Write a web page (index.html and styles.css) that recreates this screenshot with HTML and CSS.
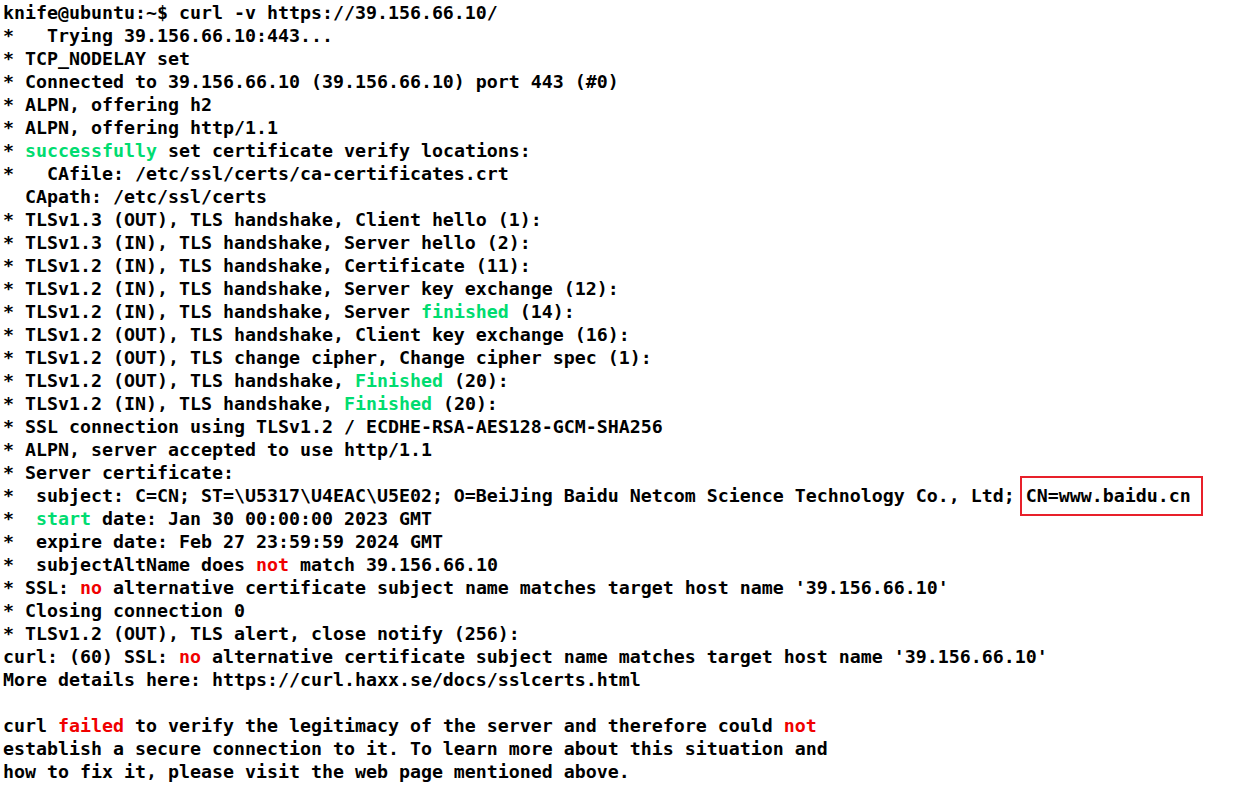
FILE: index.html
```html
<!DOCTYPE html>
<html lang="en">
<head>
    <meta charset="UTF-8">
    <title>curl -v https://39.156.66.10/</title>
    <link rel="stylesheet" href="styles.css">
</head>
<body>
<div class="term">
    <div class="line">knife@ubuntu:~$ curl -v https://39.156.66.10/</div>
    <div class="line">*   Trying 39.156.66.10:443...</div>
    <div class="line">* TCP_NODELAY set</div>
    <div class="line">* Connected to 39.156.66.10 (39.156.66.10) port 443 (#0)</div>
    <div class="line">* ALPN, offering h2</div>
    <div class="line">* ALPN, offering http/1.1</div>
    <div class="line">* <span class="ok">successfully</span> set certificate verify locations:</div>
    <div class="line">*   CAfile: /etc/ssl/certs/ca-certificates.crt</div>
    <div class="line">  CApath: /etc/ssl/certs</div>
    <div class="line">* TLSv1.3 (OUT), TLS handshake, Client hello (1):</div>
    <div class="line">* TLSv1.3 (IN), TLS handshake, Server hello (2):</div>
    <div class="line">* TLSv1.2 (IN), TLS handshake, Certificate (11):</div>
    <div class="line">* TLSv1.2 (IN), TLS handshake, Server key exchange (12):</div>
    <div class="line">* TLSv1.2 (IN), TLS handshake, Server <span class="ok">finished</span> (14):</div>
    <div class="line">* TLSv1.2 (OUT), TLS handshake, Client key exchange (16):</div>
    <div class="line">* TLSv1.2 (OUT), TLS change cipher, Change cipher spec (1):</div>
    <div class="line">* TLSv1.2 (OUT), TLS handshake, <span class="ok">Finished</span> (20):</div>
    <div class="line">* TLSv1.2 (IN), TLS handshake, <span class="ok">Finished</span> (20):</div>
    <div class="line">* SSL connection using TLSv1.2 / ECDHE-RSA-AES128-GCM-SHA256</div>
    <div class="line">* ALPN, server accepted to use http/1.1</div>
    <div class="line">* Server certificate:</div>
    <div class="line">*  subject: C=CN; ST=\U5317\U4EAC\U5E02; O=BeiJing Baidu Netcom Science Technology Co., Ltd; <span class="mark">CN=www.baidu.cn</span></div>
    <div class="line">*  <span class="ok">start</span> date: Jan 30 00:00:00 2023 GMT</div>
    <div class="line">*  expire date: Feb 27 23:59:59 2024 GMT</div>
    <div class="line">*  subjectAltName does <span class="bad">not</span> match 39.156.66.10</div>
    <div class="line">* SSL: <span class="bad">no</span> alternative certificate subject name matches target host name '39.156.66.10'</div>
    <div class="line">* Closing connection 0</div>
    <div class="line">* TLSv1.2 (OUT), TLS alert, close notify (256):</div>
    <div class="line">curl: (60) SSL: <span class="bad">no</span> alternative certificate subject name matches target host name '39.156.66.10'</div>
    <div class="line">More details here: https://curl.haxx.se/docs/sslcerts.html</div>
    <div class="line"></div>
    <div class="line">curl <span class="bad">failed</span> to verify the legitimacy of the server and therefore could <span class="bad">not</span></div>
    <div class="line">establish a secure connection to it. To learn more about this situation and</div>
    <div class="line">how to fix it, please visit the web page mentioned above.</div>
</div>
</body>
</html>
```

FILE: styles.css
```css
body {
    margin: 0;
    padding: 1px 0 0 3px;
    background: #fff;
    color: #000;
}
.term {
    font-family: "DejaVu Sans Mono", "Liberation Mono", monospace;
    font-weight: bold;
    font-size: 18.27px;
    line-height: 23px;
}
.line {
    height: 23px;
    white-space: pre;
}
.ok { color: #00dc70; }
.bad { color: #f00000; }
.mark { position: relative; }
.mark::after {
    content: "";
    position: absolute;
    top: -9px;
    bottom: -10px;
    left: -6px;
    right: -12px;
    border: 2px solid #e8202a;
}
```
